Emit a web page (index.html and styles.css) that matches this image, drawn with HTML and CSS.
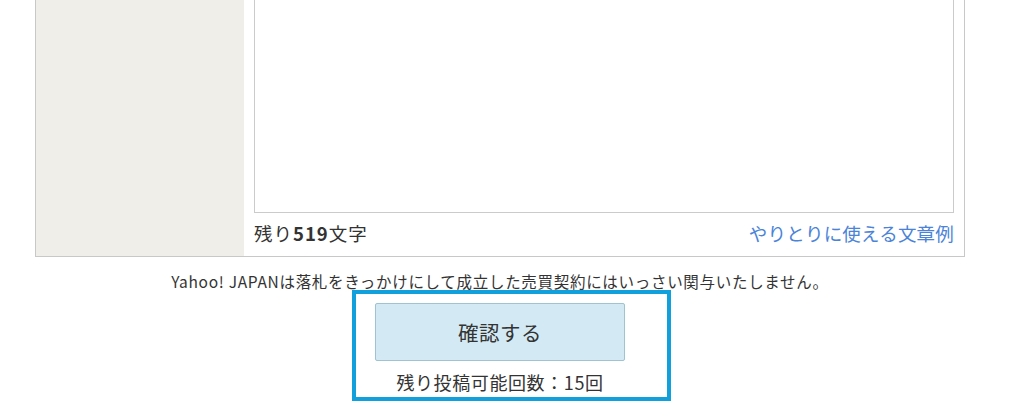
FILE: index.html
```html
<!DOCTYPE html>
<html lang="ja">
<head>
  <meta charset="UTF-8">
  <title>取引メッセージ</title>
  <link rel="stylesheet" href="styles.css">
</head>
<body>

  <div class="page">
    <!-- メッセージ入力欄 -->
    <div class="form-box">
      <div class="label-cell"></div>
      <div class="input-cell">
        <textarea class="message"></textarea>
        <div class="input-meta">
          <span class="counter">残り<b>519</b>文字</span>
          <a href="#" class="examples">やりとりに使える文章例</a>
        </div>
      </div>
    </div>

    <p class="notice">Yahoo! JAPANは落札をきっかけにして成立した売買契約にはいっさい関与いたしません。</p>

    <div class="submit-area">
      <button class="submit">確認する</button>
      <p class="remaining">残り投稿可能回数：15回</p>
    </div>
  </div>

  <!-- 注目枠 -->
  <div class="highlight"></div>

</body>
</html>
```

FILE: styles.css
```css
* {
  margin: 0;
  padding: 0;
  box-sizing: border-box;
}
body {
  font-family: "Noto Sans CJK JP", sans-serif;
  color: #333;
  background: #fff;
  overflow: hidden;
}
a {
  color: #4a83d8;
  text-decoration: none;
}

.page {
  width: 930px;
  margin: -100px 0 0 35px;
}

/* 入力欄のテーブル */
.form-box {
  display: flex;
  border: 1px solid #c8c8c8;
}
.label-cell {
  width: 208px;
  background: #efeee8;
}
.input-cell {
  flex: 1;
  padding: 10px 10px 0 10px;
}
.message {
  display: block;
  width: 100%;
  height: 302px;
  border: 1px solid #cbcbcb;
  resize: none;
}
.input-meta {
  display: flex;
  justify-content: space-between;
  align-items: center;
  height: 43px;
  padding-bottom: 4px;
  font-size: 18.5px;
}
.counter {
  letter-spacing: 1px;
}
.counter b {
  font-weight: bold;
}
.examples {
  letter-spacing: 0.2px;
}

/* 注意書き */
.notice {
  margin-top: 13px;
  font-size: 15.5px;
  line-height: 22px;
  letter-spacing: 0.7px;
  text-align: center;
}

/* 確認ボタン */
.submit-area {
  display: flex;
  flex-direction: column;
  align-items: center;
  margin-top: 11px;
}
.submit {
  width: 250px;
  height: 58px;
  background: #d3eaf4;
  border: 1px solid #9fc3d0;
  border-radius: 2px;
  font-family: inherit;
  font-size: 20.5px;
  letter-spacing: 0.5px;
  color: #333;
  cursor: pointer;
}
.remaining {
  margin-top: 9px;
  font-size: 18px;
  line-height: 24px;
  letter-spacing: 0.6px;
}

.highlight {
  position: absolute;
  left: 352px;
  top: 290px;
  width: 319px;
  height: 111px;
  border: 4px solid #12a0dc;
  pointer-events: none;
}
```
